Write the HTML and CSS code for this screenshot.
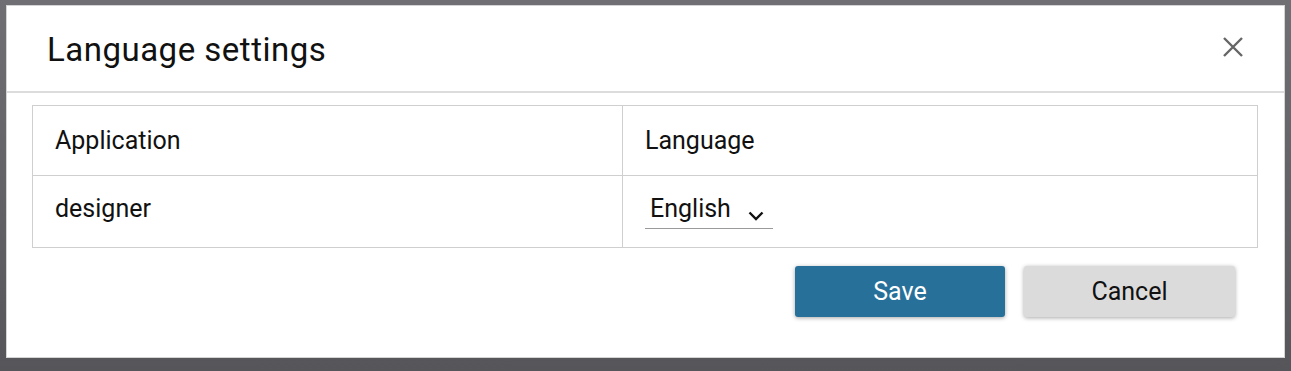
FILE: index.html
```html
<!DOCTYPE html>
<html>
<head>
<meta charset="utf-8">
<link rel="stylesheet" href="styles.css">
</head>
<body>
<div class="dialog">
  <div class="header">
    <h1 class="title">Language settings</h1>
    <button class="close" aria-label="Close">
      <svg width="20" height="20" viewBox="0 0 20 20"><path d="M1 1 L19 19 M19 1 L1 19" stroke="#666" stroke-width="2.4" fill="none"/></svg>
    </button>
  </div>
  <div class="body">
    <table class="grid">
      <tr class="row row-head">
        <td class="cell col1">Application</td>
        <td class="cell">Language</td>
      </tr>
      <tr class="row row-body">
        <td class="cell col1">designer</td>
        <td class="cell cell-select">
          <div class="select">
            <span class="select-text">English</span>
            <svg class="chev" width="16" height="10" viewBox="0 0 16 10"><path d="M1.5 1.5 L8 8 L14.5 1.5" stroke="#111" stroke-width="2.4" fill="none"/></svg>
          </div>
        </td>
      </tr>
    </table>
    <div class="actions">
      <button class="btn btn-primary">Save</button>
      <button class="btn btn-secondary">Cancel</button>
    </div>
  </div>
</div>
</body>
</html>
```
FILE: styles.css
```css
html, body {
  margin: 0;
  padding: 0;
}
body {
  width: 1291px;
  height: 371px;
  background: linear-gradient(#6f6f74, #55555a);
  font-family: Roboto, "Liberation Sans", sans-serif;
  overflow: hidden;
}
.dialog {
  margin: 5px 0 0 6px;
  width: 1279px;
  height: 353px;
  background: #fff;
  border: 1px solid #d4d4d4;
  box-sizing: border-box;
}
.header {
  height: 85px;
  border-bottom: 2px solid #dcdcdc;
  display: flex;
  align-items: center;
  justify-content: space-between;
  padding: 0 41px 0 40px;
}
.title {
  margin: 0;
  font-weight: 400;
  font-size: 33px;
  color: #111;
  letter-spacing: 0.5px;
  padding-top: 2px;
}
.close {
  border: 0;
  background: none;
  padding: 0;
  width: 20px;
  height: 20px;
  margin-bottom: 3px;
  display: flex;
}
.body {
  padding: 12px 26px 0 25px;
}
.grid {
  width: 100%;
  border-collapse: collapse;
}
.cell {
  border: 1px solid #cfcfcf;
  padding: 0 0 0 22px;
  font-size: 25px;
  line-height: 29px;
  color: #111;
  box-sizing: border-box;
  vertical-align: top;
}
.col1 {
  width: 590px;
}
.row-head .cell {
  height: 70px;
  padding-top: 20px;
}
.row-body .cell {
  height: 72px;
  padding-top: 18px;
}
.row-body .cell-select {
  padding-top: 16px;
}
.select {
  display: flex;
  align-items: flex-start;
  width: 128px;
  height: 37px;
  box-sizing: border-box;
  border-bottom: 1px solid #9a9a9a;
  padding: 2px 0 0 5px;
}
.select-text {
  font-size: 25px;
  line-height: 29px;
  color: #111;
}
.chev {
  margin-left: 17px;
  margin-top: 17px;
}
.actions {
  display: flex;
  justify-content: flex-end;
  gap: 19px;
  margin-top: 18px;
  padding-right: 23px;
}
.btn {
  height: 51px;
  border: 0;
  border-radius: 3px;
  font-family: Roboto, "Liberation Sans", sans-serif;
  font-size: 25px;
  box-shadow: 0 1px 4px rgba(0,0,0,0.35);
  padding: 0;
}
.btn-primary {
  width: 210px;
  background: #27709a;
  color: #fff;
  font-weight: 400;
}
.btn-secondary {
  width: 211px;
  background: #dbdbdb;
  color: #111;
}
```
